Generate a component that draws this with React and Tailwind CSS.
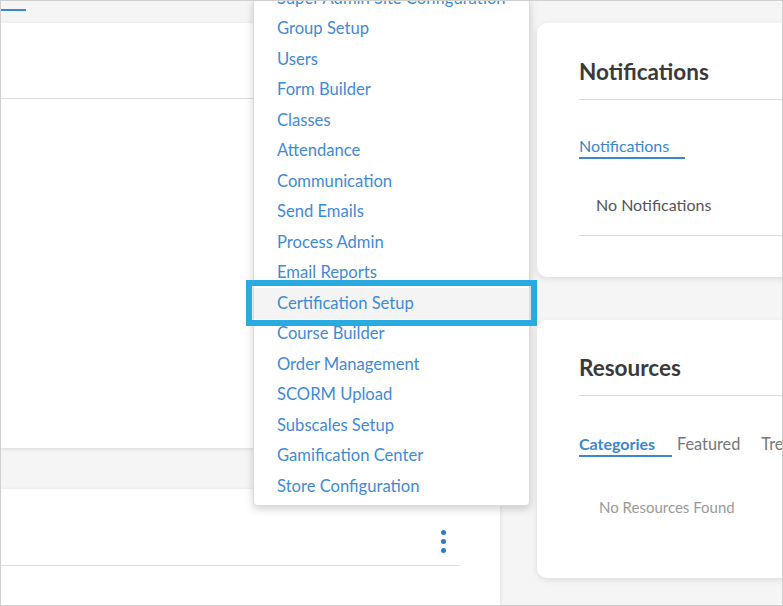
const menuItems = [
  'Super Admin Site Configuration',
  'Group Setup',
  'Users',
  'Form Builder',
  'Classes',
  'Attendance',
  'Communication',
  'Send Emails',
  'Process Admin',
  'Email Reports',
  'Certification Setup',
  'Course Builder',
  'Order Management',
  'SCORM Upload',
  'Subscales Setup',
  'Gamification Center',
  'Store Configuration',
];

const App = () => {
  return (
    <div className="w-[783px] h-[606px] border border-[#cfcfcf] bg-[#f5f5f5] relative overflow-hidden font-['Lato','Open_Sans',sans-serif]">
      <div className="flex">
        {/* Left column */}
        <div className="w-[499px] shrink-0 flex flex-col h-[604px]">
          <div className="h-[22px]">
            <span className="block w-[25px] h-[2px] mt-[8px] bg-[#3a87d0]" />
          </div>
          <div className="h-[425px] bg-white shadow-[0_1px_4px_rgba(0,0,0,0.12)]">
            <div className="h-[75px]" />
            <div className="w-[458px] h-px bg-[#dcdcdc]" />
          </div>
          <div className="mt-[41px] flex-1 bg-white shadow-[0_1px_4px_rgba(0,0,0,0.12)]">
            <div className="flex justify-end w-[458px] pt-[41px] pr-[13px]">
              <div className="flex flex-col gap-[4px] items-center">
                <span className="w-[5px] h-[5px] rounded-full bg-[#2b7bc8]" />
                <span className="w-[5px] h-[5px] rounded-full bg-[#2b7bc8]" />
                <span className="w-[5px] h-[5px] rounded-full bg-[#2b7bc8]" />
              </div>
            </div>
            <div className="mt-[12px] w-[458px] h-px bg-[#dcdcdc]" />
          </div>
        </div>

        {/* Right column */}
        <div className="ml-[37px] w-[300px] shrink-0 pt-[22px]">
          <div className="h-[254px] bg-white rounded-[10px] shadow-[0_2px_6px_rgba(0,0,0,0.1)] pl-[42px]">
            <h2 className="pt-[35px] text-[22.5px] leading-[28px] font-bold text-[#3a3a3a]">Notifications</h2>
            <div className="mt-[13px] h-px bg-[#d9d9d9]" />
            <div className="mt-[34px]">
              <span className="inline-block w-[106px] text-[16px] leading-[20px] pb-[1px] text-[#3a87d0] border-b-2 border-[#3a87d0]">
                Notifications
              </span>
            </div>
            <p className="mt-[36px] pl-[17px] text-[16px] leading-[20px] text-[#555]">No Notifications</p>
            <div className="mt-[20px] h-px bg-[#d9d9d9]" />
          </div>

          <div className="mt-[43px] h-[258px] bg-white rounded-[10px] shadow-[0_2px_6px_rgba(0,0,0,0.1)] pl-[42px]">
            <h2 className="pt-[34px] text-[22.5px] leading-[28px] font-bold text-[#3a3a3a]">Resources</h2>
            <div className="mt-[13px] h-px bg-[#d9d9d9]" />
            <div className="mt-[38px] flex items-start text-[16px] leading-[20px] whitespace-nowrap">
              <span className="w-[93px] pb-[1px] font-bold text-[#3a87d0] border-b-2 border-[#3a87d0]">Categories</span>
              <span className="ml-[5px] text-[16.3px] text-[#777]">Featured</span>
              <span className="ml-[21px] text-[16.3px] text-[#777]">Trending</span>
            </div>
            <p className="mt-[40px] pl-[20px] text-[15px] leading-[20px] text-[#9a9a9a]">No Resources Found</p>
          </div>
        </div>
      </div>

      {/* Dropdown menu */}
      <div className="absolute left-[252px] top-[-1px] w-[277px] h-[506px] bg-white border border-[#dadada] rounded-b-[4px] shadow-[0_3px_8px_rgba(0,0,0,0.18)] overflow-hidden">
        <ul className="mt-[-18px]">
          {menuItems.map((item) => (
            <li
              key={item}
              className={`h-[30.5px] flex items-center pl-[23px] text-[16.6px] text-[#3f8ad8] whitespace-nowrap ${
                item === 'Certification Setup' ? 'bg-[#f4f4f4]' : ''
              }`}
            >
              {item}
            </li>
          ))}
        </ul>
      </div>

      {/* Highlight annotation */}
      <div className="absolute left-[245px] top-[279px] w-[291px] h-[46px] border-[6px] border-[#29aae1]" />
    </div>
  );
};

export default App;
